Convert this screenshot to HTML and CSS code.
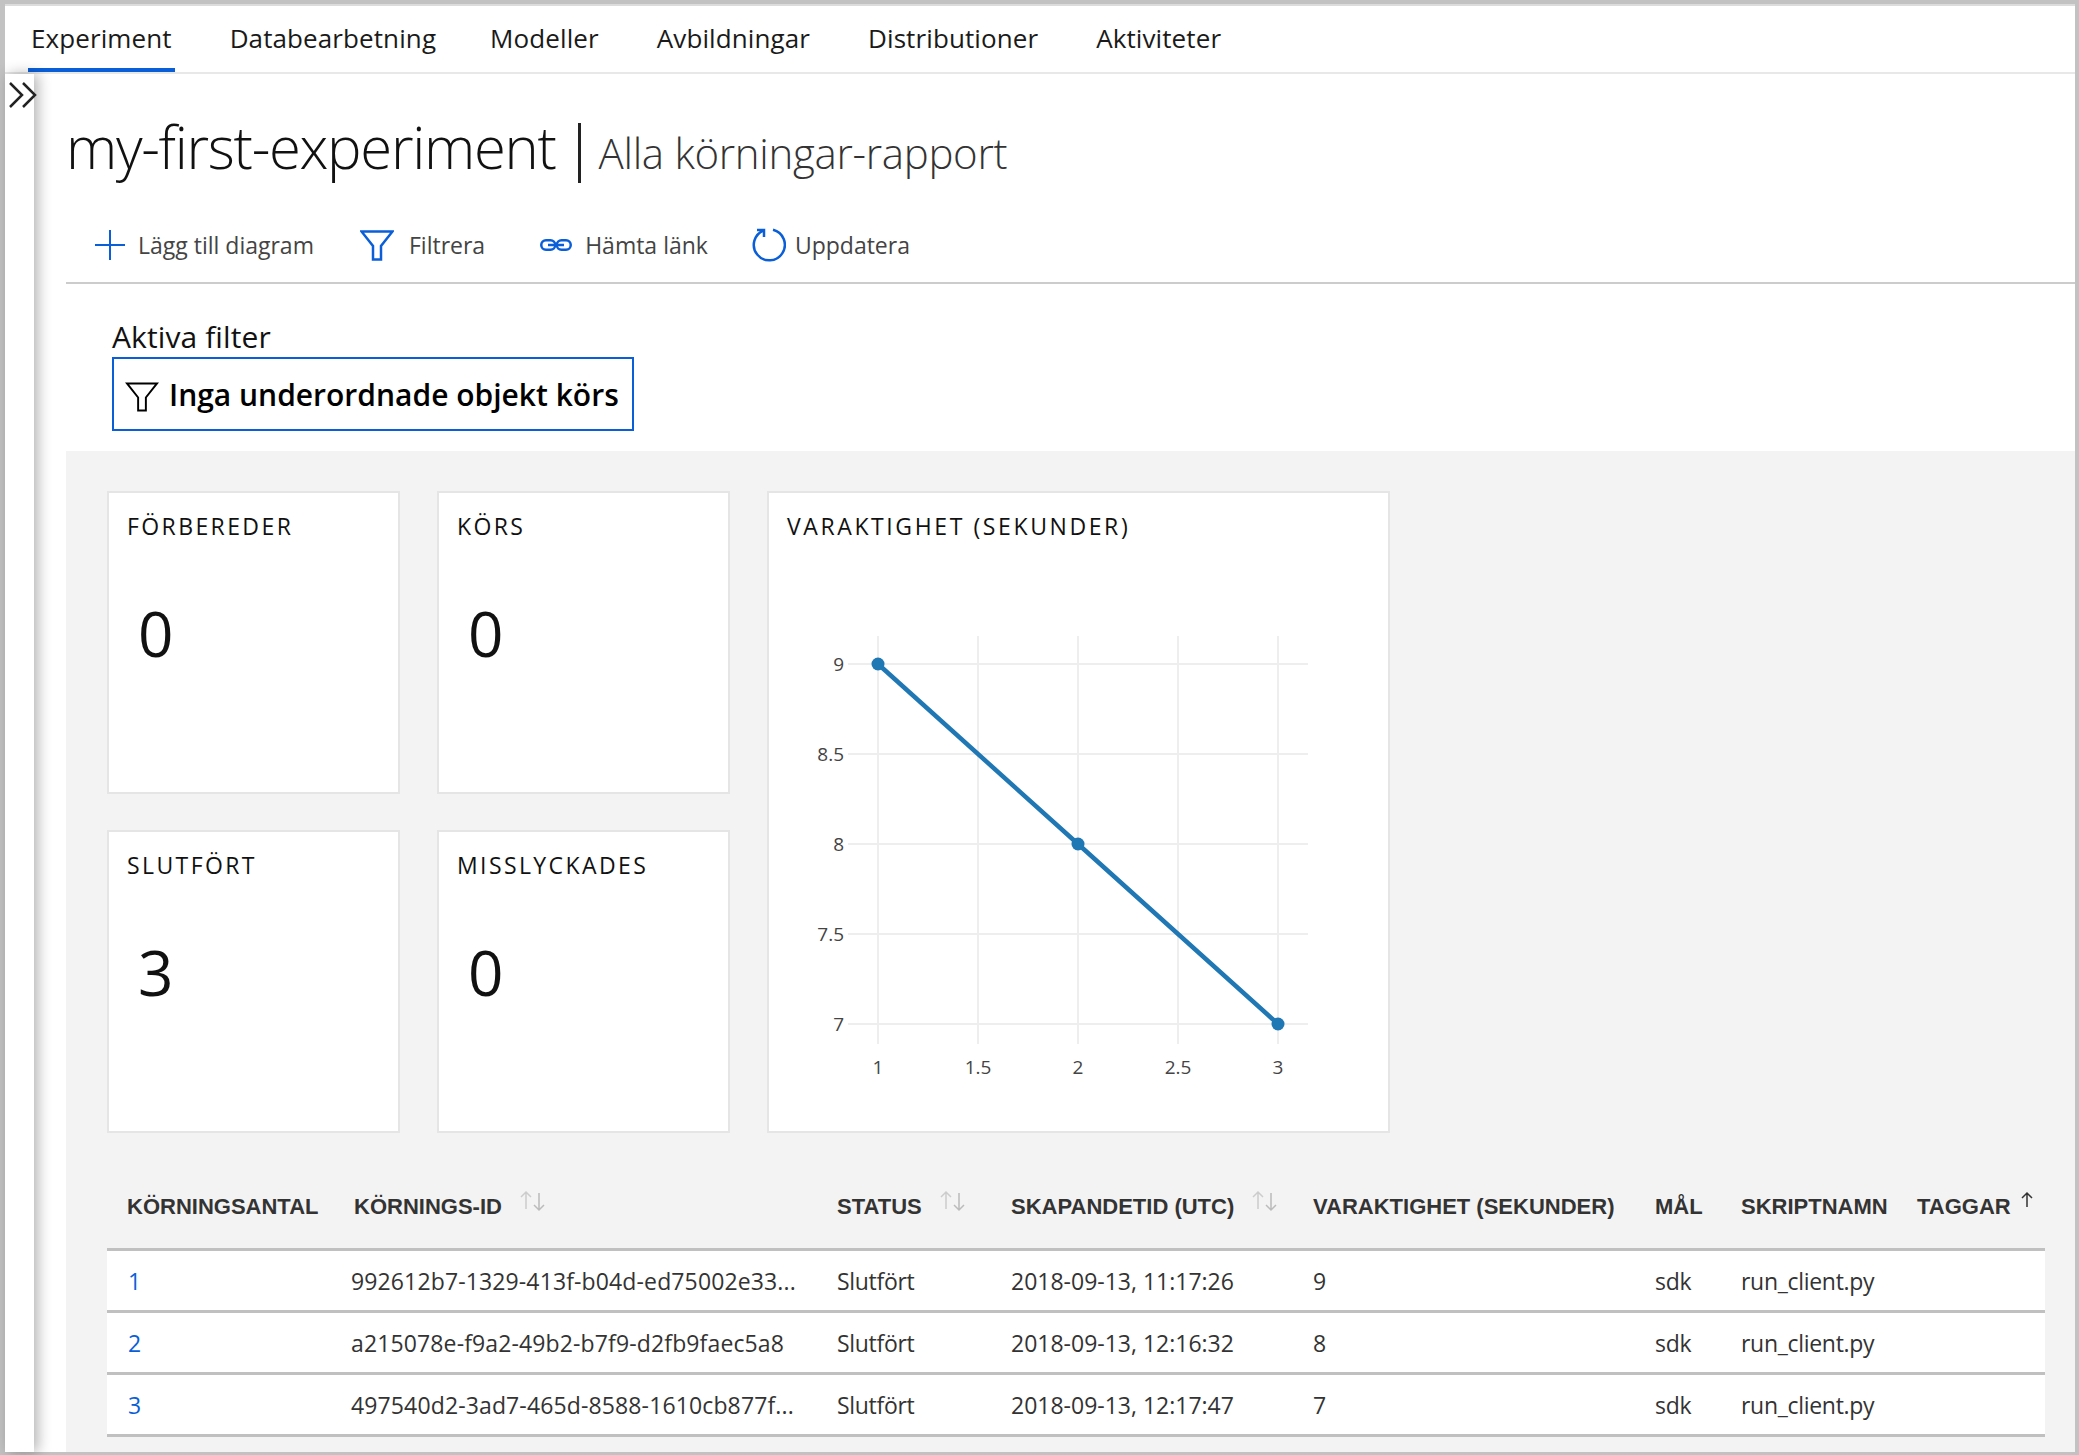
FILE: index.html
```html
<!DOCTYPE html>
<html lang="sv">
<head>
  <meta charset="UTF-8" />
  <title>my-first-experiment | Alla körningar-rapport</title>
  <link rel="stylesheet" href="styles.css">
</head>
<body>
  <div class="frame">
    <nav class="tabs">
      <a class="tab active">Experiment</a>
      <a class="tab tab-data">Databearbetning</a>
      <a class="tab">Modeller</a>
      <a class="tab">Avbildningar</a>
      <a class="tab">Distributioner</a>
      <a class="tab">Aktiviteter</a>
    </nav>

    <div class="body-row">
      <aside class="sidebar">
        <svg class="chevrons" width="30" height="26" viewBox="0 0 30 26">
          <path d="M2 1l12 12L2 25M15 1l12 12-12 12" fill="none" stroke="#222" stroke-width="2.500"/>
        </svg>
      </aside>

      <main class="content">
        <div class="title-row">
          <h1 class="title">my-first-experiment</h1>
          <span class="title-sep"></span>
          <span class="subtitle">Alla körningar-rapport</span>
        </div>

        <div class="toolbar">
          <button class="tool tool-add">
            <svg width="32" height="32" viewBox="0 0 32 32"><path d="M16 1v30M1 16h30" stroke="#0a5fd8" stroke-width="2" fill="none"/></svg>
            <span>Lägg till diagram</span>
          </button>
          <button class="tool tool-filter">
            <svg width="34" height="31" viewBox="0 0 34 31"><path d="M1.500 1.500h31L21 16v13.500h-8V16z" stroke="#0a5fd8" stroke-width="2.500" fill="none"/></svg>
            <span>Filtrera</span>
          </button>
          <button class="tool tool-link">
            <svg width="32" height="12" viewBox="0 0 32 12"><path d="M8 6h16" stroke="#0a5fd8" stroke-width="2.500"/><rect x="1.250" y="1.250" width="14" height="9.500" rx="4.750" stroke="#0a5fd8" stroke-width="2.500" fill="none"/><rect x="16.750" y="1.250" width="14" height="9.500" rx="4.750" stroke="#0a5fd8" stroke-width="2.500" fill="none"/></svg>
            <span>Hämta länk</span>
          </button>
          <button class="tool tool-refresh">
            <svg width="34" height="36" viewBox="0 0 34 36"><path d="M21 2.800A15.500 15.500 0 1 1 12 3.300" stroke="#0a5fd8" stroke-width="2.500" fill="none"/><path d="M5 3h7v7" stroke="#0a5fd8" stroke-width="2.500" fill="none"/></svg>
            <span>Uppdatera</span>
          </button>
        </div>

        <section class="filters">
          <div class="filters-label">Aktiva filter</div>
          <div class="filter-chip">
            <svg width="34" height="30" viewBox="0 0 34 31"><path d="M1.500 1.500h31L21 16v13.500h-8V16z" stroke="#000" stroke-width="2" fill="none"/></svg>
            <span>Inga underordnade objekt körs</span>
          </div>
        </section>

        <section class="report">
          <div class="cards">
            <div class="card"><div class="card-label">FÖRBEREDER</div><div class="card-value">0</div></div>
            <div class="card"><div class="card-label">KÖRS</div><div class="card-value">0</div></div>
            <div class="card card-chart">
              <div class="card-label">VARAKTIGHET (SEKUNDER)</div>
              <svg class="chart" width="618" height="490" viewBox="0 0 618 490">
                <g class="grid">
                  <path d="M79 50h460M79 140h460M79 230h460M79 320h460M79 410h460"/>
                  <path d="M109 22v408M209 22v408M309 22v408M409 22v408M509 22v408"/>
                </g>
                <g class="ticks-y">
                  <text x="75" y="57">9</text>
                  <text x="75" y="147">8.5</text>
                  <text x="75" y="237">8</text>
                  <text x="75" y="327">7.5</text>
                  <text x="75" y="417">7</text>
                </g>
                <g class="ticks-x">
                  <text x="109" y="460">1</text>
                  <text x="209" y="460">1.5</text>
                  <text x="309" y="460">2</text>
                  <text x="409" y="460">2.5</text>
                  <text x="509" y="460">3</text>
                </g>
                <path class="line" d="M109 50L309 230L509 410"/>
                <circle class="dot" cx="109" cy="50" r="6.500"/>
                <circle class="dot" cx="309" cy="230" r="6.500"/>
                <circle class="dot" cx="509" cy="410" r="6.500"/>
              </svg>
            </div>
            <div class="card"><div class="card-label">SLUTFÖRT</div><div class="card-value">3</div></div>
            <div class="card"><div class="card-label">MISSLYCKADES</div><div class="card-value">0</div></div>
          </div>

          <table class="runs">
            <colgroup>
              <col class="c-count"><col class="c-id"><col class="c-status"><col class="c-time"><col class="c-dur"><col class="c-target"><col class="c-script"><col>
            </colgroup>
            <thead>
              <tr>
                <th>KÖRNINGSANTAL</th>
                <th class="shift">KÖRNINGS-ID<svg class="sort" width="26" height="22" viewBox="0 0 26 22"><path d="M6 19V2M1 7l5-5 5 5"/><path class="down" d="M19 3v17M14 15l5 5 5-5"/></svg></th>
                <th>STATUS<svg class="sort" width="26" height="22" viewBox="0 0 26 22"><path d="M6 19V2M1 7l5-5 5 5"/><path class="down" d="M19 3v17M14 15l5 5 5-5"/></svg></th>
                <th>SKAPANDETID (UTC)<svg class="sort" width="26" height="22" viewBox="0 0 26 22"><path d="M6 19V2M1 7l5-5 5 5"/><path class="down" d="M19 3v17M14 15l5 5 5-5"/></svg></th>
                <th>VARAKTIGHET (SEKUNDER)</th>
                <th>MÅL</th>
                <th>SKRIPTNAMN</th>
                <th>TAGGAR<svg class="sort-on" width="12" height="18" viewBox="0 0 12 18"><path d="M6 16V2M1 7l5-5 5 5"/></svg></th>
              </tr>
            </thead>
            <tbody>
              <tr>
                <td class="link">1</td>
                <td class="run-id">992612b7-1329-413f-b04d-ed75002e33...</td>
                <td>Slutfört</td>
                <td class="time">2018-09-13, 11:17:26</td>
                <td>9</td>
                <td>sdk</td>
                <td>run_client.py</td>
                <td></td>
              </tr>
              <tr>
                <td class="link">2</td>
                <td class="run-id">a215078e-f9a2-49b2-b7f9-d2fb9faec5a8</td>
                <td>Slutfört</td>
                <td class="time">2018-09-13, 12:16:32</td>
                <td>8</td>
                <td>sdk</td>
                <td>run_client.py</td>
                <td></td>
              </tr>
              <tr>
                <td class="link">3</td>
                <td class="run-id">497540d2-3ad7-465d-8588-1610cb877f...</td>
                <td>Slutfört</td>
                <td class="time">2018-09-13, 12:17:47</td>
                <td>7</td>
                <td>sdk</td>
                <td>run_client.py</td>
                <td></td>
              </tr>
            </tbody>
          </table>
        </section>
      </main>
    </div>
  </div>
</body>
</html>
```

FILE: styles.css
```css
:root {
  --blue: #0a5fd8;
  --frame: #c2c2c2;
  --panel: #f3f3f3;
  --card-line: #e5e5e5;
}
* {
  margin: 0;
  padding: 0;
  box-sizing: border-box;
}
html, body {
  height: 100%;
  overflow: hidden;
}
body {
  font-family: "Open Sans", "Noto Sans", sans-serif;
  color: #111;
  background: #fff;
}
.frame {
  height: 1455px;
  display: flex;
  flex-direction: column;
  border: 4px solid var(--frame);
  border-left-width: 5px;
  border-bottom-width: 3px;
}

/* top tabs */
.tabs {
  height: 70px;
  flex: none;
  display: flex;
  align-items: flex-start;
  padding: 2px 0 0 23px;
  border-top: 2px solid #dcdcdc;
  border-bottom: 2px solid #e8e8e8;
  font-size: 26px;
  letter-spacing: 0.1px;
}
.tab {
  height: 64px;
  padding: 12px 3px 0;
  margin-right: 52px;
  border-bottom: 4px solid transparent;
  white-space: nowrap;
  color: #1a1a1a;
}
.tab.active {
  border-bottom-color: var(--blue);
}
.tab-data { margin-right: 48px; }

.body-row {
  flex: 1;
  display: flex;
  min-height: 0;
}
.sidebar {
  width: 29px;
  flex: none;
  padding: 8px 0 0 3px;
  background: #fff;
  box-shadow: 4px 0 14px rgba(0, 0, 0, 0.3);
  position: relative;
}
.chevrons {
  display: block;
}
.content {
  flex: 1;
  min-width: 0;
  padding-left: 32px;
  display: flex;
  flex-direction: column;
}

.title-row {
  height: 136px;
  flex: none;
  display: flex;
  align-items: baseline;
  padding-top: 33px;
}
.title {
  font-size: 58px;
  font-weight: 300;
  letter-spacing: -1.3px;
  white-space: nowrap;
}
.title-sep {
  width: 3px;
  height: 60px;
  background: #222;
  margin: 16px 18px 0 22px;
  align-self: flex-start;
}
.subtitle {
  font-size: 42px;
  font-weight: 300;
  letter-spacing: -0.3px;
  color: #333;
  white-space: nowrap;
}

.toolbar {
  height: 74px;
  flex: none;
  display: flex;
  align-items: flex-start;
  padding: 15px 0 0 28px;
  border-bottom: 2px solid #ccc;
}
.tool {
  display: flex;
  align-items: center;
  height: 40px;
  background: none;
  border: none;
  font: inherit;
  font-size: 23px;
  color: #444;
  white-space: nowrap;
}
.tool svg {
  flex: none;
  margin-right: 12px;
}
.tool-add { margin-right: 46px; }
.tool-filter { margin-right: 55px; }
.tool-filter svg { margin-right: 15px; }
.tool-link { margin-right: 44px; }
.tool-link svg { margin-right: 13px; }
.tool-refresh svg { margin-right: 9px; }

.filters {
  height: 167px;
  flex: none;
  padding: 33px 0 0 46px;
}
.filters-label {
  height: 40px;
  font-size: 30px;
  line-height: 40px;
  letter-spacing: 0.1px;
  color: #111;
}
.filter-chip {
  width: 522px;
  height: 74px;
  display: flex;
  align-items: center;
  padding-left: 11px;
  border: 2px solid var(--blue);
  font-size: 30px;
  font-weight: 600;
  color: #000;
  white-space: nowrap;
}
.filter-chip svg {
  margin-right: 10px;
  flex: none;
  margin-top: 6px;
}

.report {
  flex: 1;
  background: var(--panel);
  padding: 40px 30px 0 41px;
  min-height: 0;
}
.cards {
  display: grid;
  grid-template-columns: 293px 293px 623px;
  grid-template-rows: 303px 303px;
  gap: 36px 37px;
}
.card {
  background: #fff;
  border: 2px solid var(--card-line);
  padding: 17px 18px;
}
.card-chart {
  grid-column: 3;
  grid-row: 1 / span 2;
  position: relative;
}
.card-label {
  font-size: 23px;
  line-height: 32px;
  letter-spacing: 2.4px;
  color: #111;
  white-space: nowrap;
}
.card-chart .card-label {
  letter-spacing: 2.6px;
}
.card-value {
  font-size: 62px;
  line-height: 84px;
  margin: 49px 0 0 11px;
  color: #111;
}
.chart {
  position: absolute;
  left: 0;
  top: 121px;
}
.grid path {
  stroke: #eee;
  stroke-width: 2;
  fill: none;
}
.ticks-y text,
.ticks-x text {
  font-family: "Open Sans", sans-serif;
  font-size: 19px;
  fill: #444;
}
.ticks-y text { text-anchor: end; }
.ticks-x text { text-anchor: middle; }
.line {
  stroke: #1f77b4;
  stroke-width: 4.500;
  fill: none;
}
.dot { fill: #1f77b4; }

.runs {
  width: 1938px;
  table-layout: fixed;
  border-collapse: collapse;
}
.c-count { width: 224px; }
.c-id { width: 486px; }
.c-status { width: 174px; }
.c-time { width: 302px; }
.c-dur { width: 342px; }
.c-target { width: 86px; }
.c-script { width: 176px; }
.runs th {
  height: 116px;
  padding: 0 0 27px 20px;
  vertical-align: bottom;
  text-align: left;
  font-family: "Liberation Sans", Arial, sans-serif;
  font-size: 22px;
  font-weight: 700;
  line-height: 28px;
  color: #333;
  white-space: nowrap;
  border-bottom: 3px solid #c0c0c0;
}
.runs th.shift { padding-left: 23px; }
.runs td {
  height: 62px;
  padding: 2px 0 0 20px;
  background: #fff;
  font-size: 23px;
  letter-spacing: -0.3px;
  color: #333;
  white-space: nowrap;
  border-bottom: 3px solid #c0c0c0;
}
.runs td.link {
  color: var(--blue);
  padding-left: 21px;
}
.runs td.run-id { letter-spacing: 0.13px; }
.runs td.time { letter-spacing: 0; }
.sort {
  margin-left: 18px;
  vertical-align: 2px;
}
.sort path {
  stroke: #ccc;
  stroke-width: 1.5;
  fill: none;
}
.sort path.down { stroke: #bbb; }
.sort-on {
  margin-left: 10px;
  vertical-align: 5px;
}
.sort-on path {
  stroke: #333;
  stroke-width: 1.5;
  fill: none;
}
```
